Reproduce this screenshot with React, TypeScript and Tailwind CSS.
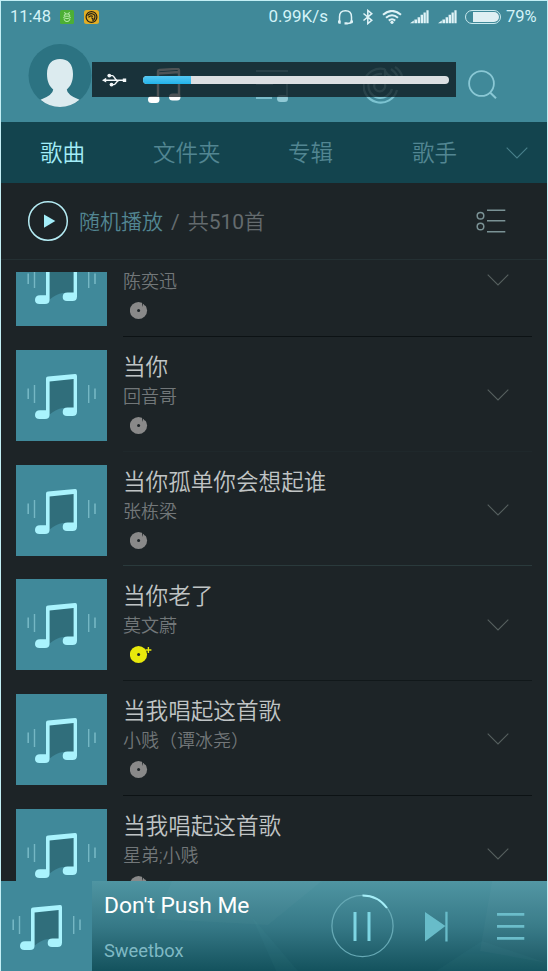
import { HTMLAttributes, ReactNode, SVGProps } from 'react'
import { clsx } from 'clsx'

type Song = {
  title?: string
  artist: string
  hq?: boolean
  line: string
}

const songs: Song[] = [
  { artist: '陈奕迅', line: 'border-[#0c1214]' },
  { title: '当你', artist: '回音哥', line: 'border-[#1f282b]' },
  { title: '当你孤单你会想起谁', artist: '张栋梁', line: 'border-[#2a3a3c]' },
  { title: '当你老了', artist: '莫文蔚', hq: true, line: 'border-[#11181a]' },
  { title: '当我唱起这首歌', artist: '小贱（谭冰尧）', line: 'border-[#0c1214]' },
  { title: '当我唱起这首歌', artist: '星弟;小贱', line: 'border-[#1f292c]' },
]

const AlbumArt = ({ className }: HTMLAttributes<HTMLDivElement>) => (
  <div className={clsx('shrink-0 overflow-hidden bg-[#40899a]', className)}>
    <svg width="91" height="91" viewBox="0 0 91 91" fill="none">
      <path d="M33 30.5 58 27.5V58H47C42 58.5 38 61 33 65Z" fill="#306e7b" />
      <path
        d="M30 28.5Q30 26.7 32 26.5L59 24Q61 23.8 61 26V61.5Q61 66 56.5 66H51Q46.7 66 46.7 62Q46.7 57.6 51.5 57.6H57.6V29L33.6 31.4V64.5Q33.6 69 29 69H23.5Q19 69 19 65Q19 60.3 24 60.3H30Z"
        fill="#a9f3fd"
      />
      <path d="M12.2 38.5V49M79 38.5V49" stroke="#75b7c4" strokeWidth="1.6" />
      <path d="M18.5 35V53M72.7 35V53" stroke="#75b7c4" strokeWidth="1.4" />
    </svg>
  </div>
)

const Chevron = (props: SVGProps<SVGSVGElement>) => (
  <svg width="22" height="12" viewBox="0 0 22 12" fill="none" {...props}>
    <path d="M.7.7 11 11 21.3.7" stroke="currentColor" strokeWidth="1.1" />
  </svg>
)

const Disc = ({ hq }: { hq?: boolean }) => (
  <svg width="24" height="20" viewBox="0 0 24 20">
    <circle cx="8.5" cy="10.5" r="8.6" fill={hq ? '#e8e80c' : '#898989'} />
    <circle cx="8.6" cy="10.6" r="1.5" fill="#1d2427" />
    {hq ? (
      <>
        <path d="M15 3.2 17.5 5.2V9.4H19V2.5Z" fill="#1d2427" />
        <path d="M18.4 3V9M15.4 6H21.4" stroke="#e8e80c" strokeWidth="1.4" />
      </>
    ) : (
      <path d="M12.4 7 13.4 3.4 14.6 5.6 18 5.4 15 1 12 1Z" fill="#1d2427" />
    )}
  </svg>
)

const Signal = () => (
  <svg width="19" height="14" viewBox="0 0 19 14" fill="#dff3f7">
    <path d="M0 13.2 3.8 10.6V13.2ZM4.4 9.6H7V13.2H4.4ZM7.6 7.2H10V13.2H7.6ZM10.6 4.8H13V13.2H10.6ZM13.5 2.6H15.8V13.2H13.5ZM16.4.2H18.6V13.2H16.4Z" />
  </svg>
)

const StatusBar = () => (
  <div className="flex h-[32px] items-center pl-[9px] text-[16px] text-[#d3f3f8]">
    <span className="w-[50px] text-[16.5px]">11:48</span>
    <svg width="14" height="14" viewBox="0 0 14 14" fill="none">
      <rect width="14" height="14" rx="1.5" fill="#4caf35" />
      <path
        d="M4.5 2 5.5 4M9.5 2 8.5 4M4 6.2Q4 3.8 7 3.8Q10 3.8 10 6.2ZM3.2 7.6Q7 9.8 10.8 7.6M4 9Q4.5 11.6 7 11.6Q9.5 11.6 10 9"
        stroke="#c2f0b8"
        strokeWidth=".9"
      />
    </svg>
    <svg className="ml-2.5" width="15" height="14" viewBox="0 0 15 14" fill="none">
      <rect width="15" height="14" rx="2.5" fill="#e2ae25" />
      <circle cx="7.5" cy="7" r="5.4" stroke="#262014" strokeWidth="1.2" />
      <path
        d="M3.5 5.5Q7 2 10.8 5.2M4.5 7.4Q6.5 4.8 8.8 6.4M10.8 5.2Q11.6 9 8.5 11"
        stroke="#262014"
        strokeWidth="1.2"
      />
      <path d="M7 7.2 9.6 8 8.4 10.2Z" fill="#262014" />
    </svg>
    <span className="ml-auto text-[17px]">0.99K/s</span>
    <svg className="ml-[9px]" width="17" height="16" viewBox="0 0 16 16" fill="none">
      <path
        d="M2 13.5V8Q2 1.8 8 1.8Q14 1.8 14 8V13.5M14 13Q13 14.6 9.5 14.4"
        stroke="#dff3f7"
        strokeWidth="1.5"
      />
      <path
        d="M.5 11.6H3.2V14.8H2Q.5 14.8.5 13.2ZM12.8 11.6H15.5V13.2Q15.5 14.6 12.8 14.6ZM7 13.2H10V15.6H7Z"
        fill="#dff3f7"
      />
    </svg>
    <svg className="ml-[8px]" width="12" height="16" viewBox="0 0 11 16" fill="none">
      <path d="M1 4.5 9.3 11.3 5.3 14.6V1.4L9.3 4.7 1 11.5" stroke="#dff3f7" strokeWidth="1.5" />
    </svg>
    <svg className="ml-[8px]" width="20" height="14" viewBox="0 0 20 14" fill="none">
      <path
        d="M1 4.8Q10-3 19 4.8M4 7.8Q10 2.6 16 7.8M6.8 10.6Q10 8 13.2 10.6"
        stroke="#dff3f7"
        strokeWidth="2"
      />
      <circle cx="10" cy="12.3" r="1.6" fill="#dff3f7" />
    </svg>
    <div className="ml-[8px] flex gap-[9px]">
      <Signal />
      <Signal />
    </div>
    <div className="ml-[8px] flex h-[14px] w-[36px] items-center justify-end rounded-full border border-[#c9e9ee] p-px">
      <div className="h-[10px] w-[26px] rounded-r-full bg-[#dfeff3]" />
    </div>
    <span className="ml-[5px] w-[41px] text-[16.5px]">79%</span>
  </div>
)

const VolumeOverlay = () => (
  <div className="absolute left-[91px] top-[61px] flex h-[35px] w-[364px] items-center bg-[#0a1015]/[.72] pl-2.5">
    <svg width="25" height="14" viewBox="0 0 25 14" fill="none">
      <path
        d="M2 7.2H22M7.5 2.6H10.5C12.5 3 12.5 6.6 15 7.2M10 11.6H12C14.5 11 14 8 17 7.2"
        stroke="#f4f8f9"
        strokeWidth="1.4"
      />
      <path d="M0 7.2 4.2 4.8V9.6ZM20.8 5.5H24.2V8.9H20.8Z" fill="#f4f8f9" />
      <circle cx="7.3" cy="2.6" r="1.9" fill="#f4f8f9" />
      <circle cx="9.5" cy="11.6" r="1.9" fill="#f4f8f9" />
    </svg>
    <div className="ml-4 h-2 w-[306px] overflow-hidden rounded-full bg-[#dcdfe2]">
      <div className="h-full w-12 bg-gradient-to-b from-[#53c8f3] to-[#1fb4ea]" />
    </div>
  </div>
)

const Header = () => (
  <header className="relative h-[121px] bg-[#408999]">
    <StatusBar />
    <div className="flex items-start pl-[27px] pt-[10px]">
      <svg width="64" height="64" viewBox="0 0 64 64">
        <circle cx="32" cy="32.5" r="31.5" fill="#2c7382" />
        <path
          d="M32 16C40 16 45 21 45 31C45 38 43 43 38.8 46.5Q39 52 51.5 56.8Q43 64 32 64Q21 64 12.5 56.8Q25 52 25.2 46.5C21 43 19 38 19 31C19 21 24 16 32 16Z"
          fill="#dcebef"
        />
      </svg>
      <svg className="ml-14 mt-[25px]" width="33" height="36" viewBox="0 0 33 36" fill="none">
        <path
          d="M10 30V3.5Q10 2.2 11.5 2L29 .9Q31 .8 31 2.5V28M10 5.5 31 4"
          stroke="#fff"
          strokeWidth="2.4"
        />
        <rect y="28" width="11.5" height="7" rx="3.5" fill="#fff" />
        <rect x="21" y="25.5" width="11.5" height="7" rx="3.5" fill="#fff" />
      </svg>
      <svg className="ml-[75px] mt-[26px]" width="33" height="34" viewBox="0 0 33 34" fill="none">
        <path d="M0 2H32M0 15H17M0 29H16" stroke="#79bccb" strokeWidth="1.8" />
        <path d="M22 13H31V28" stroke="#79bccb" strokeWidth="1.8" />
        <rect x="21" y="26" width="11" height="7" rx="3.5" fill="#90cad6" />
      </svg>
      <svg className="ml-[74px] mt-[23px]" width="40" height="38" viewBox="0 0 40 38" fill="none">
        <path
          d="M22 3.2A17 17 0 1 0 34 24M19 8A12 12 0 1 0 29 23M22 3V18.5A5.5 5.5 0 1 1 18 14.5M22 5Q24 9 29 11M28 3Q35 8 36 16M32 1Q37 4 39 10"
          stroke="#7cc3d1"
          strokeWidth="2.2"
        />
      </svg>
      <svg className="ml-[65px] mt-[27px]" width="29" height="30" viewBox="0 0 29 30" fill="none">
        <circle cx="13.5" cy="13.5" r="12.4" stroke="#8ac8d5" strokeWidth="1.8" />
        <path d="M21.8 22.2 28 28.3" stroke="#8ac8d5" strokeWidth="2" />
      </svg>
    </div>
    <VolumeOverlay />
  </header>
)

type TabProps = { active?: boolean; className?: string; children: ReactNode }

const Tab = ({ active, className, children }: TabProps) => (
  <span
    className={clsx(
      'text-[22.5px] font-[350] whitespace-nowrap',
      active ? 'text-[#a3edf8]' : 'text-[#528692]',
      className,
    )}
  >
    {children}
  </span>
)

const Tabs = () => (
  <nav className="flex h-[61px] items-center bg-[#13444e] pl-[39px] pt-[3px]">
    <Tab active className="w-[113px]">歌曲</Tab>
    <Tab className="w-[135px]">文件夹</Tab>
    <Tab className="w-[124px]">专辑</Tab>
    <Tab className="w-[94px]">歌手</Tab>
    <Chevron className="mb-[3px] text-[#49808b]" />
  </nav>
)

const ShuffleRow = () => (
  <div className="flex h-[77px] items-center border-b border-[#243033] pl-[26px] font-[350]">
    <svg width="42" height="42" viewBox="0 0 42 42" fill="none">
      <circle cx="21" cy="21" r="19.3" stroke="#b4ebf3" strokeWidth="1.5" />
      <path d="M17 14.5 28.3 21 17 27.7Z" fill="#a3edf8" />
    </svg>
    <span className="ml-2.5 pt-[3px] text-[21px] text-[#528692]">随机播放</span>
    <span className="ml-[8px] pt-[3px] text-[21px] font-normal text-[#646b6e]">/</span>
    <span className="ml-[8px] pt-[3px] text-[21px] text-[#646b6e]">
      共<span className="font-normal">510</span>首
    </span>
    <svg className="ml-auto mr-[41px]" width="30" height="26" viewBox="0 0 30 26" fill="none">
      <path d="M11 2.2H29.3M11 12.8H29.3M11 23.8H29.3" stroke="#7a9295" strokeWidth="1.5" />
      <circle cx="4.5" cy="7.8" r="3.3" stroke="#7a9295" strokeWidth="1.5" />
      <circle cx="4.5" cy="18.5" r="3.3" stroke="#7a9295" strokeWidth="1.5" />
    </svg>
  </div>
)

const SongRow = ({ song }: { song: Song }) => (
  <li className="flex h-[114.75px] shrink-0 px-[15px]">
    <AlbumArt className="mt-[13px] h-[91px] w-[91px]" />
    <div className={clsx('ml-4 flex flex-1 items-center justify-between border-b font-[350]', song.line)}>
      <div className="h-full pt-[14px]">
        <h2 className="h-[33px] text-[22.6px] leading-[34px] text-[#c0c4c5]">{song.title}</h2>
        <p className="h-[26px] text-[18px] leading-[26px] text-[#727779]">{song.artist}</p>
        <div className="ml-[7px] mt-[5px]">
          <Disc hq={song.hq} />
        </div>
      </div>
      <Chevron className="mr-[23px] mt-[3px] text-[#56605f]" />
    </div>
  </li>
)

const Player = () => (
  <footer className="flex h-[90px] bg-gradient-to-b from-[#4f95a2] via-[#367987] to-[#13525d]">
    <AlbumArt className="h-[90px] w-[91px]" />
    <div className="relative flex flex-1 pl-3">
      <svg className="absolute inset-0" width="455" height="90" viewBox="0 0 455 90">
        <path d="M64 38 80 0H230L176 44ZM400 0 388 70 455 82V0Z" fill="#fff" opacity=".025" />
        <path d="M160 36 206 90H184ZM344 90 390 60 455 82V90Z" fill="#7ad0df" opacity=".03" />
      </svg>
      <div className="w-[227px] pt-[8px]">
        <div className="text-[22.8px] leading-[33px] text-white">Don't Push Me</div>
        <div className="mt-[14px] text-[18.3px] leading-[30px] text-[#7fb9c4]">Sweetbox</div>
      </div>
      <svg className="mt-[13px]" width="64" height="64" viewBox="0 0 64 64" fill="none">
        <circle cx="31.5" cy="32" r="30.6" stroke="#66a9b5" strokeWidth="1.3" />
        <path d="M31.5 1.5A30.6 30.6 0 0 1 56 14" stroke="#a5eef8" strokeWidth="2" />
        <path d="M24 18V47M38 18V47" stroke="#7ed6e3" strokeWidth="3" />
      </svg>
      <svg className="ml-[30px] mt-[30px]" width="23" height="31" viewBox="0 0 23 31">
        <path d="M0 1 20.4 15 0 30.4ZM20.3.8H22.6V30.4H20.3Z" fill="#68bcc9" />
      </svg>
      <svg className="ml-[49px] mt-[31px]" width="28" height="30" viewBox="0 0 28 30">
        <path d="M0 1H27.3V3.8H0ZM0 13H27.3V15.8H0ZM0 25H27.3V27.8H0Z" fill="#68bcc9" />
      </svg>
    </div>
  </footer>
)

export default function App() {
  return (
    <div className="flex h-[971px] w-[548px] flex-col overflow-hidden border-x border-t border-[#c3eff5] bg-[#1d2427] font-[Roboto,'Noto_Sans_CJK_SC',sans-serif]">
      <Header />
      <Tabs />
      <ShuffleRow />
      <main className="mt-3 h-[609px] overflow-hidden">
        <ul className="-mt-[49.9px] flex flex-col">
          {songs.map((song, i) => (
            <SongRow key={i} song={song} />
          ))}
        </ul>
      </main>
      <Player />
    </div>
  )
}
